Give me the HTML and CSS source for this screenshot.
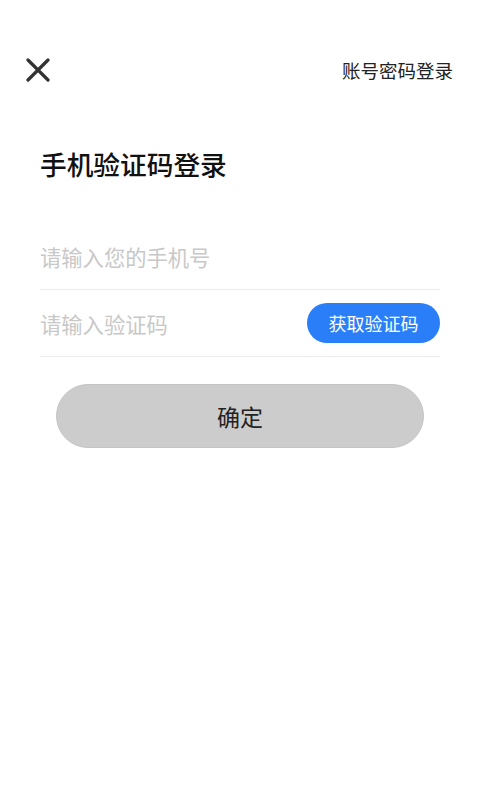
FILE: index.html
```html
<!DOCTYPE html>
<html lang="zh-CN">
<head>
<meta charset="utf-8">
<title>手机验证码登录</title>
<link rel="stylesheet" href="styles.css">
</head>
<body>
<div class="page">
  <header class="topbar">
    <button class="close" aria-label="关闭">
      <svg width="24" height="24" viewBox="0 0 24 24"><path d="M2 2L22 22M22 2L2 22" stroke="#333" stroke-width="3.2" stroke-linecap="round" fill="none"/></svg>
    </button>
    <a class="switch">账号密码登录</a>
  </header>
  <h1 class="title">手机验证码登录</h1>
  <form class="form">
    <div class="field">
      <input class="input" type="tel" placeholder="请输入您的手机号">
    </div>
    <div class="field">
      <input class="input" type="text" placeholder="请输入验证码">
      <button type="button" class="code-btn">获取验证码</button>
    </div>
    <button type="button" class="submit">确定</button>
  </form>
</div>
</body>
</html>
```
FILE: styles.css
```css
* { box-sizing: border-box; }
html, body { margin: 0; padding: 0; background: #fff; }
body { font-family: "Noto Sans CJK SC", "Noto Sans", sans-serif; color: #222; }
.page { width: 480px; height: 800px; }
.topbar {
  display: flex; align-items: center; justify-content: space-between;
  padding: 50px 27px 0 26px; height: 90px;
}
.close { border: 0; background: none; padding: 0; width: 24px; height: 24px; display: flex; }
.switch { font-size: 18.5px; color: #222; line-height: 24px; }
.title { margin: 54px 0 0 40px; font-size: 26.7px; font-weight: 500; line-height: 40px; color: #111; }
.form { padding: 0 40px; margin-top: 39px; }
.field {
  display: flex; align-items: center; height: 67px;
  border-bottom: 1px solid #ececf0;
}
.input {
  flex: 1; min-width: 0; border: 0; outline: none; padding: 0;
  font-family: inherit; font-size: 21.3px; color: #222; background: transparent;
}
.input::placeholder { color: #c8c8c8; }
.code-btn {
  width: 133px; height: 40px; border-radius: 20px; border: 0;
  background: #2a7ff8; color: #fff; font-family: inherit; font-size: 18px;
}
.submit {
  display: block; margin: 27px auto 0; width: 368px; height: 64px;
  border-radius: 32px; border: 1px solid #c4c4c4; background: #cccccc;
  font-family: inherit; font-size: 23px; color: #222;
}
```
